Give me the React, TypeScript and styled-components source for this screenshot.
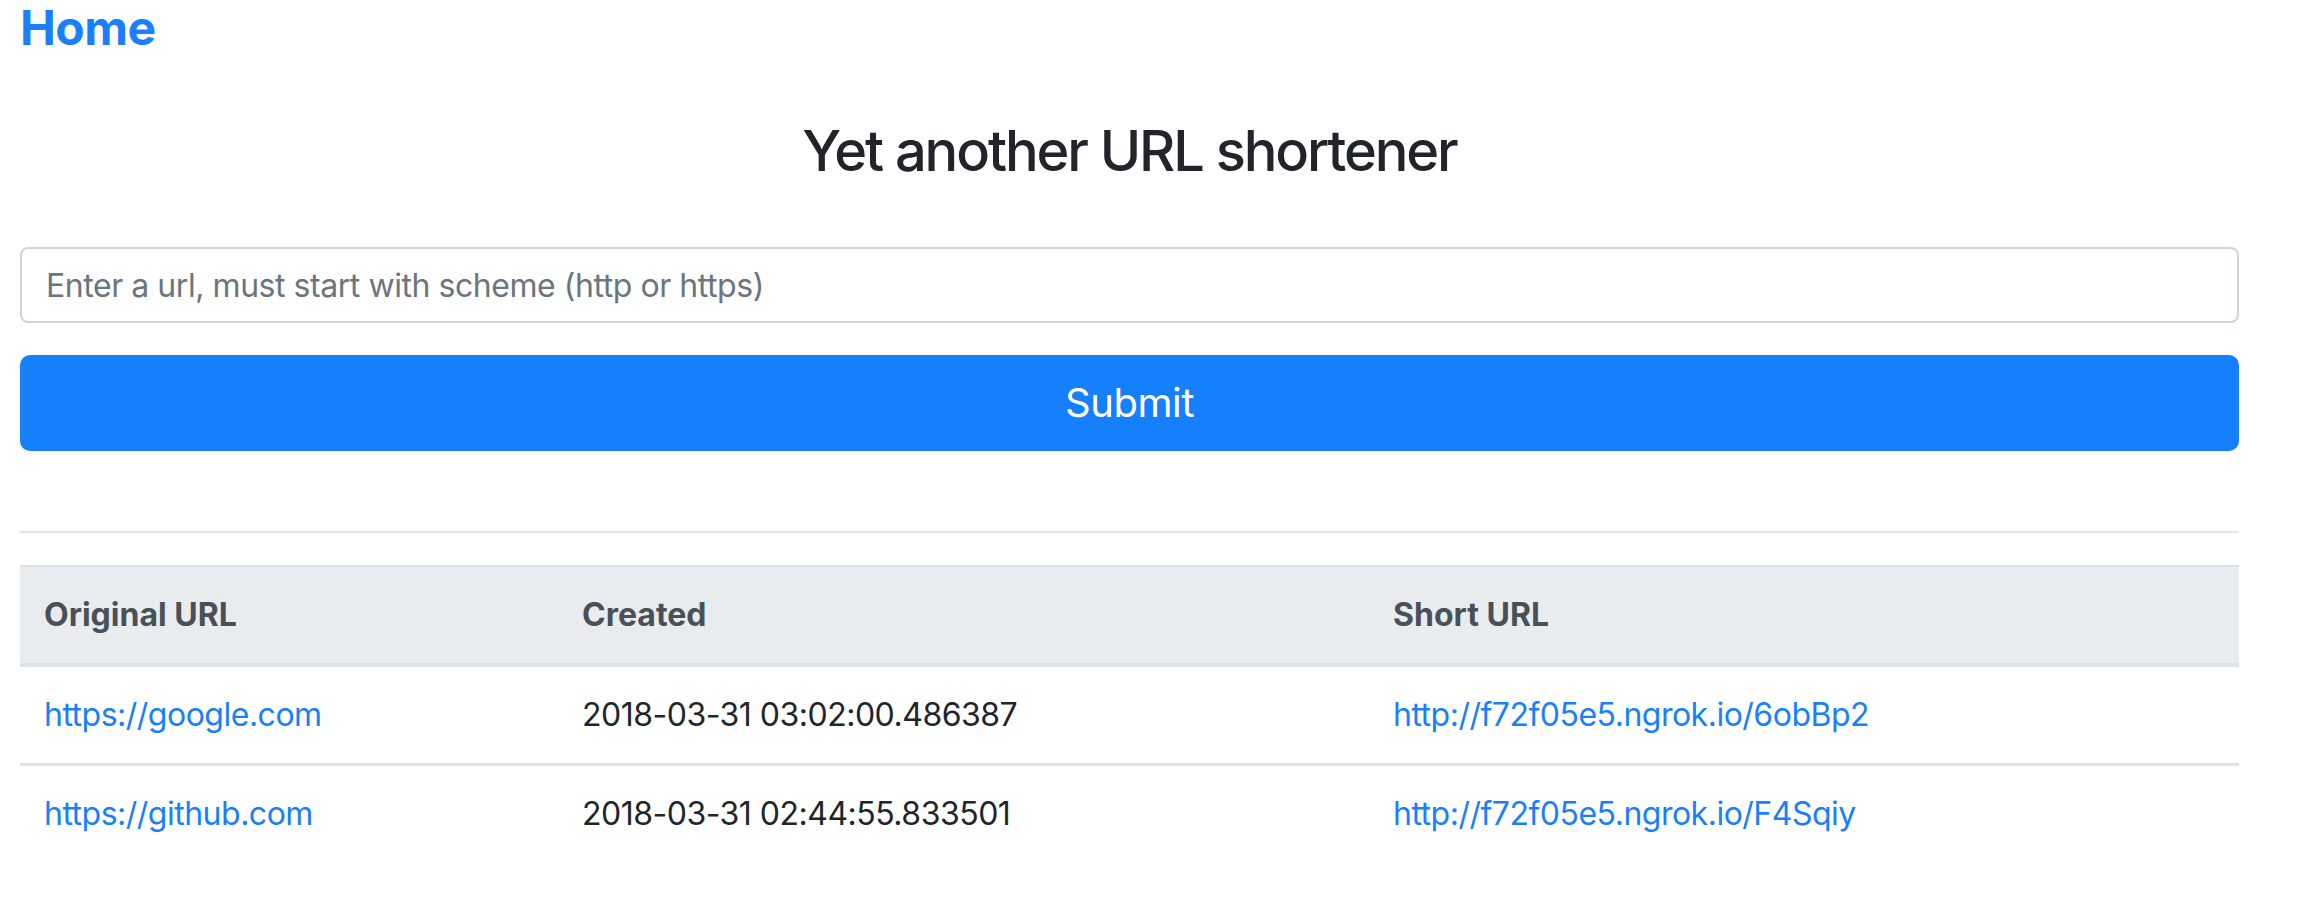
import React from "react";
import styled, { createGlobalStyle } from "styled-components";

const GlobalStyle = createGlobalStyle`
  html, body {
    margin: 0;
    padding: 0;
    background: #ffffff;
  }
  body {
    font-family: Inter, "Liberation Sans", Arial, sans-serif;
    color: #212529;
    -webkit-font-smoothing: antialiased;
  }
  * { box-sizing: border-box; }
`;

const Page = styled.div`
  padding: 0 68px 0 20px;
`;

const Nav = styled.nav`
  display: flex;
  height: 56px;
`;

const HomeLink = styled.a`
  font-size: 48px;
  font-weight: 700;
  line-height: 56px;
  color: #1a7ffc;
  text-decoration: none;
  letter-spacing: -0.5px;
`;

const Title = styled.h3`
  margin: 62px 0 62px;
  text-align: center;
  font-size: 56px;
  font-weight: 500;
  line-height: 1.2;
  color: #212529;
  letter-spacing: -2.1px;
`;

const Form = styled.form`
  display: flex;
  flex-direction: column;
  gap: 32px;
`;

const UrlInput = styled.input`
  display: block;
  width: 100%;
  height: 76px;
  padding: 12px 24px;
  font-family: inherit;
  font-size: 32px;
  line-height: 48px;
  letter-spacing: -0.45px;
  color: #495057;
  background: #ffffff;
  border: 2px solid #ced4da;
  border-radius: 8px;
  outline: none;
  &::placeholder {
    color: #6c757d;
    opacity: 1;
  }
`;

const SubmitButton = styled.button`
  display: block;
  width: 100%;
  height: 96px;
  border: none;
  border-radius: 10px;
  background: #167ffc;
  color: #ffffff;
  font-family: inherit;
  font-size: 40px;
  line-height: 60px;
  letter-spacing: -0.4px;
  cursor: pointer;
`;

const Divider = styled.hr`
  margin: 80px 0 32px;
  border: 0;
  border-top: 2px solid #e6e6e6;
`;

const Table = styled.table`
  width: 100%;
  border-collapse: collapse;
  table-layout: fixed;
  font-size: 32px;
  line-height: 48px;
`;

const HeadCell = styled.th<{ $w?: number }>`
  ${(p) => (p.$w ? `width: ${p.$w}px;` : "")}
  text-align: left;
  padding: 24px;
  font-weight: 700;
  color: #495057;
  background: #e9ecef;
  border-top: 2px solid #dee2e6;
  border-bottom: 4px solid #dee2e6;
  white-space: nowrap;
`;

const Row = styled.tr<{ $first?: boolean }>`
  & > td {
    border-top: ${(p) => (p.$first ? "0" : "3px solid #dee2e6")};
  }
`;

const Cell = styled.td`
  padding: 24px;
  color: #212529;
  white-space: nowrap;
  letter-spacing: -0.5px;
`;

const Link = styled.a`
  color: #1a7ffc;
  text-decoration: none;
`;

const rows = [
  {
    original: "https://google.com",
    created: "2018-03-31 03:02:00.486387",
    short: "http://f72f05e5.ngrok.io/6obBp2",
  },
  {
    original: "https://github.com",
    created: "2018-03-31 02:44:55.833501",
    short: "http://f72f05e5.ngrok.io/F4Sqiy",
  },
];

export default function App() {
  return (
    <>
      <GlobalStyle />
      <Page>
        <Nav>
          <HomeLink href="#">Home</HomeLink>
        </Nav>
        <Title>Yet another URL shortener</Title>
        <Form onSubmit={(e) => e.preventDefault()}>
          <UrlInput
            type="text"
            placeholder="Enter a url, must start with scheme (http or https)"
          />
          <SubmitButton type="submit">Submit</SubmitButton>
        </Form>
        <Divider />
        <Table>
          <thead>
            <tr>
              <HeadCell $w={538}>Original URL</HeadCell>
              <HeadCell $w={811}>Created</HeadCell>
              <HeadCell>Short URL</HeadCell>
            </tr>
          </thead>
          <tbody>
            {rows.map((r, i) => (
              <Row key={r.short} $first={i === 0}>
                <Cell>
                  <Link href={r.original}>{r.original}</Link>
                </Cell>
                <Cell>{r.created}</Cell>
                <Cell>
                  <Link href={r.short}>{r.short}</Link>
                </Cell>
              </Row>
            ))}
          </tbody>
        </Table>
      </Page>
    </>
  );
}
